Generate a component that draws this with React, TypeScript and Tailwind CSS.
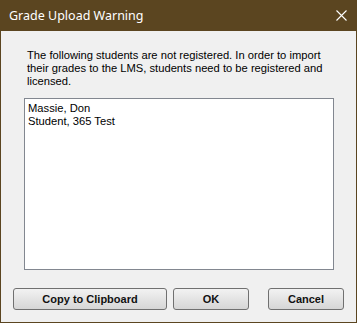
import React from 'react';

const students = ['Massie, Don', 'Student, 365 Test'];

const DialogButton: React.FC<{ label: string; className?: string }> = ({ label, className }) => (
  <button
    className={`h-[22px] rounded-[3px] border border-[#707070] bg-gradient-to-b from-[#f2f2f2] to-[#d6d6d6] text-[11px] font-bold text-[#111] font-['Liberation_Sans',Arial,sans-serif] ${className ?? ''}`}
  >
    {label}
  </button>
);

const App: React.FC = () => {
  return (
    <div className="w-[357px] h-[323px] border border-[#5b4520] flex flex-col bg-[#f0f0f0] font-['Liberation_Sans',Arial,sans-serif]">
      {/* title bar */}
      <div className="h-[30px] bg-[#5b4520] flex items-center justify-between pl-[8px] pr-[9px] text-white">
        <span className="text-[12.5px] font-['Noto_Sans','Liberation_Sans',sans-serif]">Grade Upload Warning</span>
        <svg width="11" height="11" viewBox="0 0 11 11" className="mt-[-1px]">
          <path d="M0.5 0.5 L10.5 10.5 M10.5 0.5 L0.5 10.5" stroke="white" strokeWidth="1.1" fill="none" />
        </svg>
      </div>

      <div className="flex-1 flex flex-col pt-[18px]">
        <p className="ml-[26px] whitespace-nowrap text-[11.2px] leading-[13px] text-[#000]">
          The following students are not registered. In order to import
          <br />
          their grades to the LMS, students need to be registered and
          <br />
          licensed.
        </p>

        <div className="ml-[23px] mt-[10px] w-[310px] h-[172px] bg-white border border-[#828790] px-[3px] pt-[3px] text-[11.2px] leading-[13px] text-black">
          {students.map(s => (
            <div key={s}>{s}</div>
          ))}
        </div>

        <div className="flex mt-[18px] ml-[12px]">
          <DialogButton label="Copy to Clipboard" className="w-[154px]" />
          <DialogButton label="OK" className="w-[76px] ml-[6px]" />
          <DialogButton label="Cancel" className="w-[76px] ml-[19px]" />
        </div>
      </div>
    </div>
  );
};

export default App;
